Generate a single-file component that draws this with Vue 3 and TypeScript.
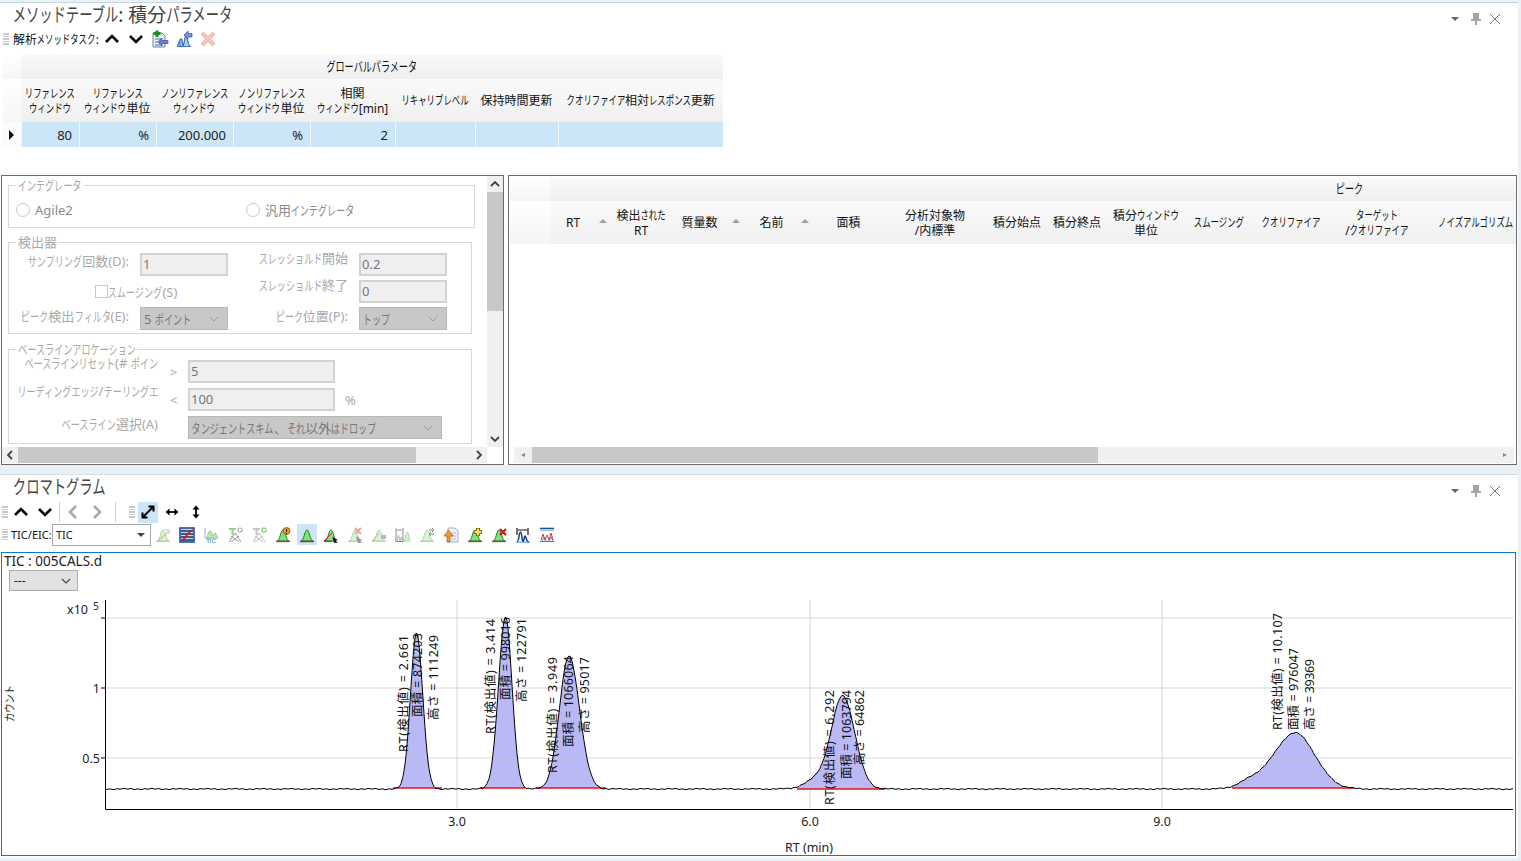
<script setup lang="ts">
import { h } from 'vue'

// カタカナ/ひらがなは Meiryo UI のように細く表示する
const Jp = (p: { t: string }) =>
  p.t.split(/([\u3040-\u30ff]+)/).map((s, i) => (i % 2 ? h('span', { class: 'kana', style: { '--n': s.length } }, s) : s))

interface Shape { d: string; fill?: string; stroke?: string; sw?: number }
interface Icon { shapes: Shape[]; label?: string; on?: boolean }

const hill = 'M2 14C5 14 5.500 3 8 3S11 14 14 14Z'
const green: Shape = { d: hill, fill: '#7fe27a', stroke: '#1c7a24', sw: 1 }
const pale: Shape = { d: hill, fill: '#dcf3d6', stroke: '#a9d8a2', sw: 1 }
const base: Shape = { d: 'M1 14.500H15', stroke: '#a33a2a', sw: 1.300 }
const paleBase: Shape = { d: 'M1 14.500H15', stroke: '#a9cdea', sw: 1 }
const cursor: Shape = { d: 'M9 9L15 13L13 14L15 16H11L10 14Z', fill: '#111', stroke: '#fff', sw: 0.400 }

const chartIcons: Icon[] = [
  { shapes: [pale, { d: 'M1 14.500H15', stroke: '#e9b3ad', sw: 1 }, { d: 'M3 14L13 5', stroke: '#d99a94', sw: 1 }, { d: 'M10 3H14V7', stroke: '#b9b9b9', sw: 1 }] },
  { shapes: [{ d: 'M1 1H15V15H1Z', fill: '#c7d6e6', stroke: '#0b4a9e', sw: 1.500 }, { d: 'M2 4H14M2 7H14M2 10H14M2 13H14', stroke: '#1f2f5c', sw: 1.300 }, { d: 'M3 14C6 12 8 5 14 3', stroke: '#d01818', sw: 1.600 }] },
  { shapes: [{ d: 'M2 1V11H15', stroke: '#8ab8e0', sw: 1 }, { d: 'M3 11C5 11 5 4 7 4S9 9 10 9 11 6 12 6 14 11 15 11Z', fill: '#bfe6b4', stroke: '#8bc7a0', sw: 1 }], label: 'TIC' },
  { shapes: [{ d: 'M2 2H9M5.500 2V8', stroke: '#a3c79c', sw: 2 }, { d: 'M2 15L8 6L14 15M4 15L12 9M12 15L4 9', stroke: '#999', sw: 1 }, { d: 'M11 3A2 2 0 1 0 15 3A2 2 0 1 0 11 3Z', stroke: '#aaa', sw: 1.200 }] },
  { shapes: [{ d: 'M2 2H9M5.500 2V8', stroke: '#c5c5c5', sw: 2 }, { d: 'M2 15L8 6L14 15M4 15L12 9M12 15L4 9', stroke: '#bbb', sw: 1 }, { d: 'M11 3A2 2 0 1 0 15 3A2 2 0 1 0 11 3Z', stroke: '#8fd08a', sw: 1.400 }] },
  { shapes: [green, base, { d: 'M8 4A3.500 3.500 0 1 0 15 4A3.500 3.500 0 1 0 8 4Z', fill: '#f09a20', stroke: '#8a4a10', sw: 0.800 }, { d: 'M11.500 2V5M11.500 6V7', stroke: '#222', sw: 1 }] },
  { shapes: [green, { d: 'M1 14.500H15', stroke: '#8a3a2a', sw: 1.400 }], on: true },
  { shapes: [green, { d: 'M1 14L9 6', stroke: '#c22', sw: 1 }, { d: 'M1 14.500H9', stroke: '#a33a2a', sw: 1 }, cursor] },
  { shapes: [pale, { d: 'M8 1L14 7M14 1L8 7', stroke: '#eda49b', sw: 2 }, { d: 'M1 14.500H9', stroke: '#e9b3ad', sw: 1 }, { d: 'M9 9L15 13L13 14L15 16H11L10 14Z', fill: '#999' }] },
  { shapes: [pale, paleBase, { d: 'M1 14L8 6', stroke: '#e0aca6', sw: 1 }, { d: 'M10 8H15V12H10Z', fill: '#b9b9b9' }] },
  { shapes: [{ d: 'M9 14C10 14 11 5 12.500 5S14 14 15 14Z', fill: '#d4f2cd', stroke: '#a9d8a2', sw: 1 }, { d: 'M1 1V15M8 1V15M1 14.500H8', stroke: '#8a8a8a', sw: 1 }, { d: 'M2 3H7', stroke: '#8a8a8a', sw: 1 }, { d: 'M2 14L3.500 8L5 14L6.500 10L7.500 14', stroke: '#9dbf98', sw: 1 }] },
  { shapes: [pale, paleBase, { d: 'M10 3H15M13 1L15 3L13 5M15 7H10M12 5L10 7L12 9', stroke: '#8a8a8a', sw: 1 }] },
  { shapes: [{ d: 'M5 1H12L15 4V15H5Z', fill: '#eef2f7', stroke: '#9fb0c2', sw: 1 }, { d: 'M8 6H13M8 9H13M8 12H13', stroke: '#b5c2d0', sw: 1 }, { d: 'M4 15V9H1L5.500 3L10 9H7V15Z', fill: '#ef9a32', stroke: '#a85c10', sw: 0.700 }] },
  { shapes: [green, base, { d: 'M11 1V9M7 5H15', stroke: '#5a4a10', sw: 4 }, { d: 'M11 1.500V8.500M7.500 5H14.500', stroke: '#ffe24a', sw: 2.400 }] },
  { shapes: [green, base, { d: 'M9 2L15 8M15 2L9 8', stroke: '#d81818', sw: 2.200 }] },
  { shapes: [{ d: 'M2 1V8M13 1V8M3 3H12', stroke: '#111', sw: 1.200 }, { d: 'M2 15C4 15 4 5 5.500 5S7 15 8 15 9 9 10 9 11 15 14 15', stroke: '#123c92', sw: 1.500 }, { d: 'M1 15.200H15', stroke: '#5f9be0', sw: 1 }] },
  { shapes: [{ d: 'M1 1.500H15', stroke: '#1f4f96', sw: 1.600 }, { d: 'M1 3.500H15', stroke: '#a8c8e4', sw: 1.400 }, { d: 'M2 13L4 7L6 13L8 8L10 13L12 6L14 13', stroke: '#d83a3a', sw: 1 }, { d: 'M3 14L5 10L7 14M10 14L12 10L14 14', stroke: '#3a5fc0', sw: 0.800 }, { d: 'M1 14.500H15', stroke: '#4a78c0', sw: 1 }] },
]

const grip = Array.from({ length: 15 })

const globalCols = [
  'リファレンス\nウィンドウ', 'リファレンス\nウィンドウ単位', 'ノンリファレンス\nウィンドウ', 'ノンリファレンス\nウィンドウ単位',
  '相関\nウィンドウ[min]', 'リキャリブレベル', '保持時間更新', 'クオリファイア相対レスポンス更新',
]
const globalRow = ['80', '%', '200.000', '%', '2', '', '', '']

const peakCols = [
  { t: 'RT', sort: true }, { t: '検出された\nRT' }, { t: '質量数', sort: true }, { t: '名前', sort: true }, { t: '面積' },
  { t: '分析対象物\n/内標準' }, { t: '積分始点' }, { t: '積分終点' }, { t: '積分ウィンドウ\n単位' }, { t: 'スムージング' },
  { t: 'クオリファイア' }, { t: 'ターゲット\n/クオリファイア' }, { t: 'ノイズアルゴリズム', clip: true },
]

// クロマトグラム: x はピクセル座標。ラベルは [文字, x, 下端, 上端]
const baseY = 789
const peaks = [
  { c: 416.5, h: 156, sl: 6, sr: 6.2, a: 393, b: 442, redY: 788,
    labels: [['RT(検出値) = 2.661', 403, 752, 635], ['面積 = 874203', 417, 717, 633], ['高さ = 111249', 433, 720, 635]] },
  { c: 505.5, h: 172, sl: 7, sr: 6.5, a: 480, b: 525, redY: 788,
    labels: [['RT(検出値) = 3.414', 490, 734, 619], ['面積 = 998016', 505, 700, 617], ['高さ = 122791', 521, 702, 618]] },
  { c: 569, h: 133, sl: 9.5, sr: 10.5, a: 536, b: 606, redY: 788,
    labels: [['RT(検出値) = 3.949', 552, 773, 657], ['面積 = 1066064', 568, 747, 656], ['高さ = 95017', 584, 733, 657]] },
  { c: 843, h: 91, sl: 11, sr: 12, a: 797, b: 885, redY: 789,
    labels: [['RT(検出値) = 6.292', 829, 805, 690], ['面積 = 1063794', 846, 779, 690], ['高さ = 64862', 859, 765, 690]] },
  { c: 1295, h: 56, sl: 20, sr: 20, a: 1232, b: 1354, redY: 788,
    labels: [['RT(検出値) = 10.107', 1277, 730, 613], ['面積 = 976047', 1293, 730, 648], ['高さ = 39369', 1309, 730, 659]] },
]
const shoulders = [
  { c: 820, h: 11, sl: 13, sr: 13 },
  { c: 1252, h: 8, sl: 13, sr: 16 },
]

const curveY = (x: number) => {
  let v = 0
  for (const p of [...peaks, ...shoulders]) {
    const s = x < p.c ? p.sl : p.sr
    v += p.h * Math.exp(-((x - p.c) ** 2) / (2 * s * s))
  }
  const noise = Math.sin(x * 0.9) * 0.35 + Math.sin(x * 0.23 + 1) * 0.3 + Math.sin(x * 2.7) * 0.2
  return +(baseY - v + noise).toFixed(1)
}

const xs = Array.from({ length: 1408 }, (_, i) => 106 + i)
const tracePath = 'M' + xs.map((x) => `${x} ${curveY(x)}`).join('L')
const fills = peaks.map((p) => {
  const pts: string[] = []
  for (let x = p.a; x <= p.b; x++) pts.push(`${x} ${curveY(x)}`)
  return `M${pts.join('L')}L${p.b} ${p.redY}L${p.a} ${p.redY}Z`
})

const labelList = peaks.flatMap((p) =>
  p.labels.map((l) => ({ t: l[0] as string, x: l[1] as number, y: l[2] as number, len: (l[2] as number) - (l[3] as number) })),
)
const gridY = [618, 688, 758]
const gridX = [457, 810, 1162]
</script>

<template>
  <div class="app">
    <section class="dock top-dock">
      <div class="titlebar">
        <h1 class="title"><Jp t="メソッドテーブル: 積分パラメータ" /></h1>
        <div class="win-btns">
          <svg class="win-menu" width="10" height="10" viewBox="0 0 10 10"><path d="M1 3H9L5 7Z" fill="#666" /></svg>
          <svg width="12" height="14" viewBox="0 0 12 14"><path d="M3 1H9V7H11V9H7V13H5V9H1V7H3Z" fill="#a5a5a5" /></svg>
          <svg width="14" height="14" viewBox="0 0 14 14"><path d="M2 2L12 12M12 2L2 12" stroke="#777" stroke-width="1" fill="none" /></svg>
        </div>
      </div>

      <div class="bar bar-method">
        <div class="grip"><i v-for="(_, i) in grip" :key="i"></i></div>
        <span class="bar-label"><Jp t="解析メソッドタスク:" /></span>
        <button class="tb"><svg width="16" height="16" viewBox="0 0 16 16"><path d="M2 11L8 5L14 11" class="chev" /></svg></button>
        <button class="tb"><svg width="16" height="16" viewBox="0 0 16 16"><path d="M2 5L8 11L14 5" class="chev" /></svg></button>
        <button class="tb">
          <svg width="18" height="18" viewBox="0 0 18 18">
            <path d="M2 3H11L14 6V17H2Z" fill="#e8eef4" stroke="#6d8296" />
            <path d="M4 9H10M4 12H10M4 15H10" stroke="#53708c" />
            <path d="M6 0.5V7M2.5 3.5H9.5" stroke="#1d8a2a" stroke-width="3" />
            <path d="M7 12L11 8V10.5H17V13.5H11V16Z" fill="#6e7fc8" stroke="#3f4f96" stroke-width="0.7" />
          </svg>
        </button>
        <button class="tb">
          <svg width="18" height="18" viewBox="0 0 18 18">
            <path d="M2 16C4 16 4 9 6 9S7 16 8 16 10 5 11 5 13 16 15 16" fill="#b5cdea" stroke="#4372b4" stroke-width="1.3" />
            <path d="M2 16.5H16M5 16V11M8 16V13" stroke="#4372b4" />
            <path d="M9 5L13 1V3.5H17V7H13V9Z" fill="#7f8fd8" stroke="#4050a0" stroke-width="0.7" />
          </svg>
        </button>
        <button class="tb">
          <svg width="18" height="18" viewBox="0 0 18 18"><path d="M3 3L15 15M15 3L3 15" stroke="#f2b1a6" stroke-width="4" /><path d="M3 3L15 15M15 3L3 15" stroke="#f7c9c0" stroke-width="2" /></svg>
        </button>
      </div>

      <div class="gtable">
        <div class="corner"></div>
        <div class="group-head"><Jp t="グローバルパラメータ" /></div>
        <div class="corner2"></div>
        <div v-for="c in globalCols" :key="c" class="col-head"><span><Jp :t="c" /></span></div>
        <div class="row-mark"><svg width="8" height="10" viewBox="0 0 8 10"><path d="M2 0L7 5L2 10Z" fill="#111" /></svg></div>
        <div v-for="(v, i) in globalRow" :key="i" class="cell">{{ v }}</div>
      </div>

      <div class="split">
        <div class="pane left-pane">
          <div class="form-view">
            <fieldset class="grp g-int">
              <legend><Jp t="インテグレータ" /></legend>
              <div class="radios">
                <label class="radio"><i></i>Agile2</label>
                <label class="radio"><i></i><span><Jp t="汎用インテグレータ" /></span></label>
              </div>
            </fieldset>

            <fieldset class="grp g-det">
              <legend>検出器</legend>
              <div class="det-grid">
                <span class="lb"><Jp t="サンプリング回数(D):" /></span>
                <div class="inp">1</div>
                <span class="lb up"><Jp t="スレッショルド開始" /></span>
                <div class="inp">0.2</div>
                <label class="check"><i></i><Jp t="スムージング(S)" /></label>
                <span class="lb up"><Jp t="スレッショルド終了" /></span>
                <div class="inp">0</div>
                <span class="lb low"><Jp t="ピーク検出フィルタ(E):" /></span>
                <div class="sel"><span><Jp t="5 ポイント" /></span><svg width="10" height="6" viewBox="0 0 10 6"><path d="M1 1L5 5L9 1" /></svg></div>
                <span class="lb low"><Jp t="ピーク位置(P):" /></span>
                <div class="sel"><span><Jp t="トップ" /></span><svg width="10" height="6" viewBox="0 0 10 6"><path d="M1 1L5 5L9 1" /></svg></div>
              </div>
            </fieldset>

            <fieldset class="grp g-base">
              <legend><Jp t="ベースラインアロケーション" /></legend>
              <div class="base-grid">
                <span class="lb tiny"><Jp t="ベースラインリセット(# ポイン" /></span>
                <span class="sign">&gt;</span>
                <div class="inp">5</div>
                <span></span>
                <span class="lb tiny"><Jp t="リーディングエッジ/テーリングエ" /></span>
                <span class="sign">&lt;</span>
                <div class="inp">100</div>
                <span class="sign pct">%</span>
                <span class="lb mid"><Jp t="ベースライン選択(A)" /></span>
                <span></span>
                <div class="sel wide"><span><Jp t="タンジェントスキム、それ以外はドロップ" /></span><svg width="10" height="6" viewBox="0 0 10 6"><path d="M1 1L5 5L9 1" /></svg></div>
              </div>
            </fieldset>
          </div>
          <div class="vscroll">
            <svg width="10" height="16" viewBox="0 0 10 16"><path d="M1 10L5 6L9 10" class="sb-arrow" /></svg>
            <div class="vtrack"><div class="vthumb"></div></div>
            <svg width="10" height="16" viewBox="0 0 10 16"><path d="M1 6L5 10L9 6" class="sb-arrow" /></svg>
          </div>
          <div class="hscroll">
            <svg width="16" height="10" viewBox="0 0 16 10"><path d="M10 1L6 5L10 9" class="sb-arrow" /></svg>
            <div class="htrack"><div class="hthumb left-thumb"></div></div>
            <svg width="16" height="10" viewBox="0 0 16 10"><path d="M6 1L10 5L6 9" class="sb-arrow" /></svg>
          </div>
          <div class="sb-corner"></div>
        </div>

        <div class="pane right-pane">
          <div class="ptable">
            <div class="p-corner"></div>
            <div class="p-group"><span><Jp t="ピーク" /></span></div>
            <div class="p-corner2"></div>
            <div v-for="c in peakCols" :key="c.t" class="p-col" :class="{ sort: c.sort, clip: c.clip }">
              <span><Jp :t="c.t" /></span>
            </div>
          </div>
          <div class="p-empty"></div>
          <div class="hscroll thin">
            <svg width="18" height="10" viewBox="0 0 18 10"><path d="M11 3L7 5L11 7Z" fill="#888" /></svg>
            <div class="htrack"><div class="hthumb right-thumb"></div></div>
            <svg width="18" height="10" viewBox="0 0 18 10"><path d="M7 3L11 5L7 7Z" fill="#888" /></svg>
          </div>
        </div>
      </div>
    </section>

    <section class="dock bottom-dock">
      <div class="titlebar">
        <h1 class="title"><Jp t="クロマトグラム" /></h1>
        <div class="win-btns">
          <svg class="win-menu" width="10" height="10" viewBox="0 0 10 10"><path d="M1 3H9L5 7Z" fill="#666" /></svg>
          <svg width="12" height="14" viewBox="0 0 12 14"><path d="M3 1H9V7H11V9H7V13H5V9H1V7H3Z" fill="#a5a5a5" /></svg>
          <svg width="14" height="14" viewBox="0 0 14 14"><path d="M2 2L12 12M12 2L2 12" stroke="#777" stroke-width="1" fill="none" /></svg>
        </div>
      </div>

      <div class="bar bar-nav">
        <div class="grip"><i v-for="(_, i) in grip" :key="i"></i></div>
        <button class="tb"><svg width="16" height="16" viewBox="0 0 16 16"><path d="M2 11L8 5L14 11" class="chev" /></svg></button>
        <button class="tb"><svg width="16" height="16" viewBox="0 0 16 16"><path d="M2 5L8 11L14 5" class="chev" /></svg></button>
        <div class="sep"></div>
        <button class="tb"><svg width="16" height="16" viewBox="0 0 16 16"><path d="M11 2L5 8L11 14" class="chev off" /></svg></button>
        <button class="tb"><svg width="16" height="16" viewBox="0 0 16 16"><path d="M5 2L11 8L5 14" class="chev off" /></svg></button>
        <div class="sep sep2"></div>
        <div class="grip"><i v-for="(_, i) in grip" :key="i"></i></div>
        <button class="tb"><span class="tb-on"><svg width="14" height="14" viewBox="0 0 14 14"><path d="M2 12L12 2M7.5 1.5H12.5V6.5M1.5 7.5V12.5H6.5" fill="none" stroke="#000" stroke-width="2" /></svg></span></button>
        <button class="tb"><svg width="14" height="14" viewBox="0 0 14 14"><path d="M2 7H12" stroke="#000" stroke-width="1.8" /><path d="M0.5 7L4.5 3.5V10.5ZM13.5 7L9.5 3.5V10.5Z" fill="#000" /></svg></button>
        <button class="tb"><svg width="14" height="14" viewBox="0 0 14 14"><path d="M7 2V12" stroke="#000" stroke-width="1.8" /><path d="M7 0.5L3.5 4.5H10.5ZM7 13.5L3.5 9.5H10.5Z" fill="#000" /></svg></button>
      </div>

      <div class="bar bar-chart">
        <div class="grip"><i v-for="(_, i) in grip" :key="i"></i></div>
        <span class="tic-label">TIC/EIC:</span>
        <div class="combo"><span>TIC</span><svg width="8" height="6" viewBox="0 0 8 6"><path d="M0 1H8L4 5Z" fill="#444" /></svg></div>
        <button v-for="(ic, i) in chartIcons" :key="i" class="tb">
          <span :class="{ 'tb-on': ic.on }">
            <svg width="16" height="16" viewBox="0 0 16 16">
              <path v-for="(s, j) in ic.shapes" :key="j" :d="s.d" :fill="s.fill ?? 'none'" :stroke="s.stroke" :stroke-width="s.sw" />
              <text v-if="ic.label" class="ic-label" x="8" y="16" text-anchor="middle">{{ ic.label }}</text>
            </svg>
          </span>
        </button>
      </div>

      <div class="chart-frame">
        <div class="chart-head">
          <div class="chart-name">TIC : 005CALS.d</div>
          <div class="chart-sel"><span>---</span><svg width="10" height="6" viewBox="0 0 10 6"><path d="M1 1L5 5L9 1" fill="none" stroke="#444" stroke-width="1.2" /></svg></div>
        </div>
        <svg class="plot" width="1513" height="262" viewBox="2 593 1513 262">
          <path v-for="(d, i) in fills" :key="i" :d="d" fill="#b9b9f6" />
          <path v-for="y in gridY" :key="y" :d="`M106 ${y}H1513`" stroke="#c4c4c4" stroke-opacity="0.7" />
          <path v-for="x in gridX" :key="x" :d="`M${x} 600V809`" stroke="#c4c4c4" stroke-opacity="0.7" />
          <path v-for="p in peaks" :key="p.c" :d="`M${p.a} ${p.redY}H${p.b}`" stroke="#f01010" stroke-width="1.5" />
          <path :d="tracePath" fill="none" stroke="#000" stroke-width="1" />
          <path d="M105.5 600V809.5H1513" fill="none" stroke="#000" />
          <path v-for="y in gridY" :key="'t' + y" :d="`M101 ${y}H105`" stroke="#000" />
          <text
            v-for="l in labelList"
            :key="l.t"
            class="peak-label"
            :transform="`rotate(-90 ${l.x} ${l.y})`"
            :x="l.x"
            :y="l.y + 4.5"
            :textLength="l.len"
          >{{ l.t }}</text>
          <text class="axis" x="88" y="614" text-anchor="end">x10</text>
          <text class="axis small" x="93" y="610">5</text>
          <text class="axis" x="100" y="693" text-anchor="end">1</text>
          <text class="axis" x="100" y="763" text-anchor="end">0.5</text>
          <text v-for="(t, i) in ['3.0', '6.0', '9.0']" :key="t" class="axis" :x="gridX[i]" y="826" text-anchor="middle">{{ t }}</text>
          <text class="axis" x="809" y="852" text-anchor="middle">RT (min)</text>
          <text class="axis y-title" transform="rotate(-90 14 722)" x="14" y="722" textLength="37" lengthAdjust="spacingAndGlyphs">カウント</text>
        </svg>
      </div>
    </section>
  </div>
</template>

<style scoped>
.app {
  width: 1521px;
  height: 861px;
  overflow: hidden;
  background: #e9f1f7;
  display: flex;
  flex-direction: column;
  font-family: 'Noto Sans', 'Noto Sans CJK JP', sans-serif;
  font-size: 12px;
  color: #222;
}
.dock {
  width: 1518px;
  background: #fff;
  box-sizing: border-box;
}
.top-dock {
  height: 463px;
  margin-top: 2px;
  border-top: 1px solid #c6d5e2;
}
.bottom-dock {
  height: 384px;
  margin-top: 9px;
  border-top: 1px solid #d6dde2;
}

.titlebar {
  height: 22px;
  display: flex;
  justify-content: space-between;
  padding: 0 16px 0 13px;
}
.title {
  margin: 0;
  font-size: 19px;
  font-weight: 400;
  line-height: 24px;
  color: #444;
  white-space: nowrap;
}
.win-btns {
  display: flex;
  align-items: center;
  gap: 6px;
  padding-top: 9px;
}
.win-menu {
  margin-right: 4px;
}

.bar {
  display: flex;
  align-items: center;
}
.bar-method {
  height: 22px;
  margin-top: 3px;
  padding-left: 3px;
}
.bar-nav {
  height: 22px;
  margin-top: 4px;
  padding-left: 2px;
}
.bar-chart {
  height: 23px;
  padding-left: 2px;
}
.grip {
  width: 7px;
  display: grid;
  grid-template-columns: repeat(3, 2px);
  gap: 1px 0;
  align-content: center;
  flex: none;
}
.grip i {
  width: 1.5px;
  height: 1.5px;
  background: #c8c8c8;
}
.bar-label {
  width: 87px;
  margin-left: 3px;
  white-space: nowrap;
  color: #111;
}
.tb {
  width: 24px;
  height: 22px;
  padding: 0;
  border: 0;
  background: none;
  display: flex;
  align-items: center;
  justify-content: center;
  flex: none;
}
.tb span {
  display: flex;
}
.tb-on {
  width: 20px;
  height: 21px;
  background: #cce4f7;
  align-items: center;
  justify-content: center;
}
.chev {
  fill: none;
  stroke: #000;
  stroke-width: 2.6;
}
.chev.off {
  stroke: #a9a9a9;
}
.sep {
  width: 1px;
  height: 20px;
  background: #cfcfcf;
  margin: 0 1px 0 2px;
}
.sep2 {
  margin: 0 13px 0 6px;
}
.tic-label {
  width: 41px;
  margin-left: 2px;
  font-size: 11px;
  white-space: nowrap;
  color: #111;
}
.combo {
  width: 99px;
  height: 22px;
  box-sizing: border-box;
  border: 1px solid #a8a8a8;
  display: flex;
  align-items: center;
  justify-content: space-between;
  padding: 0 5px 0 3px;
  font-size: 11px;
  flex: none;
}
.ic-label {
  font-size: 6px;
  font-weight: 700;
  fill: #69a6dc;
}

.gtable {
  margin: 5px 0 0 3px;
  width: 720px;
  display: grid;
  grid-template-columns: 18px 58px 77px 77px 77px 85px 80px 83px 165px;
  grid-template-rows: 24px 43px 25px;
}
.corner, .corner2 {
  background: linear-gradient(#fff, #f6f6f6);
}
.group-head {
  grid-column: 2 / 10;
  background: linear-gradient(#f9f9f9, #efefef);
  text-align: center;
  font-size: 13px;
  line-height: 22px;
  color: #111;
}
.col-head {
  background: linear-gradient(#fafafa, #f0f0f0);
  display: flex;
  align-items: center;
  justify-content: center;
  text-align: center;
  white-space: pre-line;
  line-height: 15px;
  color: #111;
}
.row-mark {
  display: flex;
  align-items: center;
  justify-content: center;
  padding-right: 2px;
  background: #fbfbfb;
}
.cell {
  background: #cde6f7;
  border-left: 1px solid #f2f8fc;
  text-align: right;
  line-height: 26px;
  padding-right: 7px;
  font-size: 13px;
  color: #222;
}

.split {
  display: flex;
  gap: 4px;
  margin: 28px 0 0 1px;
  height: 290px;
}
.pane {
  box-sizing: border-box;
  height: 290px;
  border: 1px solid #6b6b6b;
  background: #fff;
  overflow: hidden;
}
.left-pane {
  width: 503px;
  display: grid;
  grid-template-columns: 485px 16px;
  grid-template-rows: 271px 16px;
}
.right-pane {
  width: 1009px;
  display: flex;
  flex-direction: column;
}

.form-view {
  overflow: hidden;
  padding: 2px 0 0 6px;
  color: #a8a8a8;
  font-size: 13px;
}
.grp {
  margin: 0;
  padding: 0;
  box-sizing: border-box;
  border: 1px solid #d8d8d8;
  min-width: 0;
}
.grp legend {
  margin-left: 7px;
  padding: 0 2px;
  line-height: 15px;
  color: #a8a8a8;
}
.g-int {
  width: 467px;
  height: 50px;
}
.g-det {
  width: 464px;
  height: 99px;
  margin-top: 7px;
}
.g-base {
  width: 464px;
  height: 102px;
  margin-top: 8px;
}
.radios {
  display: grid;
  grid-template-columns: 230px 1fr;
  padding: 7px 0 0 7px;
}
.radio {
  display: flex;
  align-items: center;
  gap: 5px;
  color: #8a8a8a;
}
.radio span {
  color: #8a8a8a;
}
.radio i {
  width: 12px;
  height: 12px;
  border: 1px solid #c8c8c8;
  border-radius: 50%;
}
.det-grid {
  display: grid;
  grid-template-columns: 120px 88px 109px 88px;
  grid-auto-rows: 23px;
  column-gap: 11px;
  row-gap: 4px;
  padding-top: 3px;
}
.base-grid {
  display: grid;
  grid-template-columns: 149px 30px 147px 1fr;
  grid-auto-rows: 23px;
  row-gap: 5px;
  padding-top: 3px;
}
.lb {
  text-align: right;
  white-space: nowrap;
  line-height: 16px;
}
.lb.up {
  line-height: 10px;
}
.lb.low {
  line-height: 18px;
}
.lb.mid {
  line-height: 16px;
}
.lb.tiny {
  line-height: 7px;
}
.inp {
  box-sizing: border-box;
  background: #efefef;
  border: 2px solid #d2d2d2;
  padding-left: 1px;
  color: #777;
  line-height: 18px;
}
.sel {
  box-sizing: border-box;
  background: #c8c8c8;
  border: 1px solid #b8b8b8;
  display: flex;
  align-items: center;
  justify-content: space-between;
  padding: 0 8px 0 3px;
  color: #777;
  white-space: nowrap;
}
.sel path {
  fill: none;
  stroke: #9e9e9e;
}
.sel.wide {
  grid-column: 3 / 5;
  width: 254px;
}
.check {
  grid-column: 1 / 3;
  display: flex;
  align-items: center;
  padding-left: 86px;
  white-space: nowrap;
}
.check i {
  width: 13px;
  height: 13px;
  box-sizing: border-box;
  border: 1px solid #c8c8c8;
}
.sign {
  padding: 4px 0 0 12px;
  line-height: 16px;
  color: #a8a8a8;
}
.sign.pct {
  padding-left: 10px;
}

.vscroll {
  background: #f0f0f0;
  display: flex;
  flex-direction: column;
  align-items: center;
}
.vtrack {
  flex: 1;
  width: 100%;
}
.vthumb {
  height: 119px;
  background: #c8c8c8;
}
.hscroll {
  background: #f0f0f0;
  display: flex;
  align-items: center;
}
.htrack {
  flex: 1;
  height: 100%;
}
.hthumb {
  height: 100%;
  background: #c8c8c8;
}
.left-thumb {
  width: 398px;
}
.right-thumb {
  width: 566px;
}
.sb-corner {
  background: #fff;
}
.sb-arrow {
  fill: none;
  stroke: #444;
  stroke-width: 1.8;
}
.thin {
  height: 16px;
  margin: 0 2px 1px 5px;
}

.ptable {
  margin: 2px 0 0 1px;
  display: grid;
  grid-template-columns: 40px 62px 58px 75px 69px 69px 104px 60px 60px 78px 67px 78px 94px 1fr;
  grid-template-rows: 23px 43px;
}
.p-corner, .p-corner2 {
  background: linear-gradient(#fff, #f5f5f5);
}
.p-group {
  grid-column: 2 / 15;
  background: linear-gradient(#f9f9f9, #efefef);
  font-size: 13px;
  line-height: 20px;
  padding-left: 786px;
  color: #111;
}
.p-col {
  position: relative;
  background: linear-gradient(#fafafa, #f0f0f0);
  display: flex;
  align-items: center;
  justify-content: center;
  text-align: center;
  white-space: pre-line;
  line-height: 15px;
  color: #111;
}
.p-col.sort {
  padding-right: 16px;
}
.p-col.sort::after {
  content: '';
  position: absolute;
  right: 5px;
  top: 18px;
  border: 4px solid transparent;
  border-top: 0;
  border-bottom: 4px solid #a0a0a0;
}
.p-col.clip {
  justify-content: flex-start;
  padding-left: 14px;
  overflow: hidden;
  white-space: nowrap;
}
.p-empty {
  flex: 1;
}

.chart-frame {
  margin: 6px 0 0 1px;
  width: 1515px;
  height: 304px;
  box-sizing: border-box;
  border: 1px solid #0f78c8;
  display: flex;
  flex-direction: column;
}
.chart-head {
  height: 40px;
  padding-left: 2px;
}
.chart-name {
  font-size: 13.5px;
  line-height: 16px;
  color: #222;
}
.chart-sel {
  margin: 1px 0 0 5px;
  width: 69px;
  height: 21px;
  box-sizing: border-box;
  background: #e1e1e1;
  border: 1px solid #adadad;
  display: flex;
  align-items: center;
  justify-content: space-between;
  padding: 0 6px 0 4px;
  font-size: 12px;
}
.plot {
  display: block;
}
.peak-label {
  font-size: 12.5px;
  fill: #111;
}
.axis {
  font-size: 12.5px;
  fill: #222;
}
.axis.small {
  font-size: 10px;
}
.y-title {
  font-size: 11px;
}
</style>

<style>
.kana {
  display: inline-block;
  transform: scaleX(0.7);
  margin: 0 calc(var(--n) * -0.15em);
}
</style>
